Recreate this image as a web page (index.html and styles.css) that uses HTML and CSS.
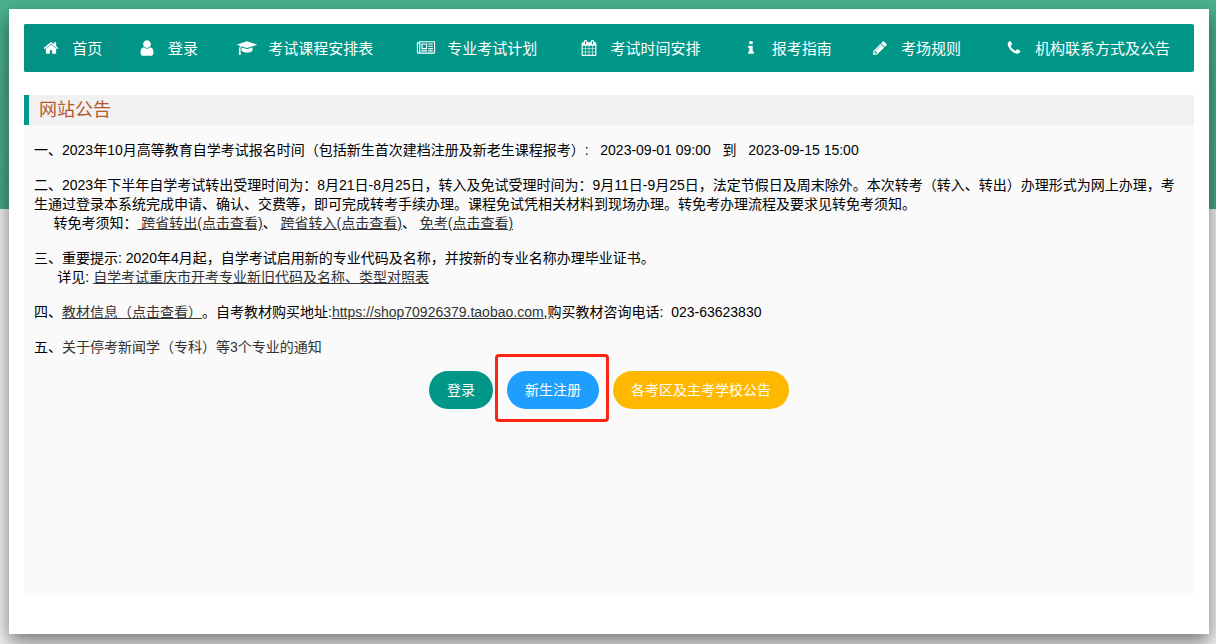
FILE: index.html
```html
<!DOCTYPE html>
<html lang="zh-CN">
<head>
<meta charset="utf-8">
<meta name="viewport" content="width=device-width, initial-scale=1">
<title>网站公告</title>
<link rel="stylesheet" href="styles.css">
</head>
<body class="page">
<div class="card">
  <nav class="nav">
    <ul class="nav-list">
      <li class="nav-item nav-item-active"><a class="nav-link" href="#"><svg class="icon" viewBox="0 0 1792 1792" aria-hidden="true"><path d="M1472 992v480q0 26-19 45t-45 19h-384v-384h-256v384h-384q-26 0-45-19t-19-45v-480q0-1 .5-3t.5-3l575-474 575 474q1 2 1 6zm223-69l-62 74q-8 9-21 11h-3q-13 0-21-7l-692-577-692 577q-12 8-24 7-13-2-21-11l-62-74q-8-10-7-23.5t11-21.5l719-599q32-26 76-26t76 26l244 204v-195q0-14 9-23t23-9h192q14 0 23 9t9 23v408l219 182q10 8 11 21.5t-7 23.5z"/></svg><span>首页</span></a></li>
      <li class="nav-item"><a class="nav-link" href="#"><svg class="icon icon-user" viewBox="0 0 1792 1792" aria-hidden="true"><path d="M1536 1399q0 109-62.5 187t-150.5 78h-854q-88 0-150.5-78t-62.5-187q0-85 8.5-160.5t31.5-152 58.5-131 94-89 134.5-34.5q131 128 313 128t313-128q76 0 134.5 34.5t94 89 58.5 131 31.5 152 8.5 160.5zm-256-887q0 159-112.5 271.5t-271.5 112.5-271.5-112.5-112.5-271.5 112.5-271.5 271.5-112.5 271.5 112.5 112.5 271.5z"/></svg><span>登录</span></a></li>
      <li class="nav-item"><a class="nav-link" href="#"><svg class="icon" viewBox="0 0 2304 1792" aria-hidden="true"><path d="M1774 836l18 316q4 69-82 128t-235 93.5-323 34.5-323-34.5-235-93.5-82-128l18-316 574 181q22 7 48 7t48-7zm530-324q0 23-22 31l-1120 352q-4 1-10 1t-10-1l-652-206q-43 34-71 111.5t-34 178.5q63 36 63 109 0 69-58 107l58 433q2 14-8 25-9 11-24 11h-192q-15 0-24-11-10-11-8-25l58-433q-58-38-58-107 0-73 65-111 11-207 98-330l-333-104q-22-8-22-31t22-31l1120-352q4-1 10-1t10 1l1120 352q22 8 22 31z"/></svg><span>考试课程安排表</span></a></li>
      <li class="nav-item"><a class="nav-link" href="#"><svg class="icon" viewBox="0 0 2048 1792" aria-hidden="true"><path d="M1024 512h-384v384h384v-384zm128 640v128h-640v-128h640zm0-768v640h-640v-640h640zm640 768v128h-512v-128h512zm0-256v128h-512v-128h512zm0-256v128h-512v-128h512zm0-256v128h-512v-128h512zm-1536 960v-960h-128v960q0 26 19 45t45 19 45-19 19-45zm1664 0v-1088h-1536v1088q0 33-11 64h1483q26 0 45-19t19-45zm128-1216v1216q0 80-56 136t-136 56h-1664q-80 0-136-56t-56-136v-1088h256v-128h1792z"/></svg><span>专业考试计划</span></a></li>
      <li class="nav-item"><a class="nav-link" href="#"><svg class="icon" viewBox="0 0 1792 1792" aria-hidden="true"><path d="M192 1664h288v-288h-288v288zm352 0h320v-288h-320v288zm-352-352h288v-320h-288v320zm352 0h320v-320h-320v320zm-352-384h288v-288h-288v288zm736 736h320v-288h-320v288zm-384-736h320v-288h-320v288zm768 736h288v-288h-288v288zm-384-352h320v-320h-320v320zm-352-864v-288q0-13-9.5-22.5t-22.5-9.5h-64q-13 0-22.5 9.5t-9.5 22.5v288q0 13 9.5 22.5t22.5 9.5h64q13 0 22.5-9.5t9.5-22.5zm736 864h288v-320h-288v320zm-384-384h320v-288h-320v288zm384 0h288v-288h-288v288zm32-480v-288q0-13-9.5-22.5t-22.5-9.5h-64q-13 0-22.5 9.5t-9.5 22.5v288q0 13 9.5 22.5t22.5 9.5h64q13 0 22.5-9.5t9.5-22.5zm384-64v1280q0 52-38 90t-90 38h-1408q-52 0-90-38t-38-90v-1280q0-52 38-90t90-38h128v-96q0-66 47-113t113-47h64q66 0 113 47t47 113v96h384v-96q0-66 47-113t113-47h64q66 0 113 47t47 113v96h128q52 0 90 38t38 90z"/></svg><span>考试时间安排</span></a></li>
      <li class="nav-item"><a class="nav-link" href="#"><svg class="icon" viewBox="0 0 1792 1792" aria-hidden="true"><path d="M1216 1344v128q0 26-19 45t-45 19h-512q-26 0-45-19t-19-45v-128q0-26 19-45t45-19h64v-384h-64q-26 0-45-19t-19-45v-128q0-26 19-45t45-19h384q26 0 45 19t19 45v576h64q26 0 45 19t19 45zm-128-1152v192q0 26-19 45t-45 19h-256q-26 0-45-19t-19-45v-192q0-26 19-45t45-19h256q26 0 45 19t19 45z"/></svg><span>报考指南</span></a></li>
      <li class="nav-item"><a class="nav-link" href="#"><svg class="icon" viewBox="0 0 1792 1792" aria-hidden="true"><path d="M491 1536l91-91-235-235-91 91v107h128v128h107zm523-928q0-22-22-22-10 0-17 7l-542 542q-7 7-7 17 0 22 22 22 10 0 17-7l542-542q7-7 7-17zm-54-192l416 416-832 832h-416v-416zm683 96q0 53-37 90l-166 166-416-416 166-165q36-38 90-38 53 0 91 38l235 234q37 39 37 91z"/></svg><span>考场规则</span></a></li>
      <li class="nav-item"><a class="nav-link" href="#"><svg class="icon" viewBox="0 0 1792 1792" aria-hidden="true"><path d="M1600 1240q0 27-10 70.5t-21 68.5q-21 50-122 106-94 51-186 51-27 0-53-3.5t-57.5-12.5-47-14.5-55.5-20.5-49-18q-98-35-175-83-127-79-264-216t-216-264q-48-77-83-175-3-9-18-49t-20.5-55.5-14.5-47-12.5-57.5-3.5-53q0-92 51-186 56-101 106-122 25-11 68.5-21t70.5-10q14 0 21 3 18 6 53 76 11 19 30 54t35 63.5 31 53.5q3 4 17.5 25t21.5 35.5 7 28.5q0 20-28.5 50t-62 55-62 53-28.5 46q0 9 5 22.5t8.5 20.5 14 24 11.5 19q76 137 174 235t235 174q2 1 19 11.5t24 14 20.5 8.5 22.5 5q18 0 46-28.5t53-62 55-62 50-28.5q14 0 28.5 7t35.5 21.5 25 17.5q25 15 53.5 31t63.5 35 54 30q70 35 76 53 3 7 3 21z"/></svg><span>机构联系方式及公告</span></a></li>
    </ul>
  </nav>
  <main class="notice">
    <h1 class="notice-title">网站公告</h1>
    <div class="notice-body">
      <p class="item">一、2023年10月高等教育自学考试报名时间（包括新生首次建档注册及新老生课程报考）:&nbsp;&nbsp; 2023-09-01 09:00 &nbsp; 到 &nbsp; 2023-09-15 15:00</p>
      <p class="item">二、2023年下半年自学考试转出受理时间为：8月21日-8月25日，转入及免试受理时间为：9月11日-9月25日，法定节假日及周末除外。本次转考（转入、转出）办理形式为网上办理，考生通过登录本系统完成申请、确认、交费等，即可完成转考手续办理。课程免试凭相关材料到现场办理。转免考办理流程及要求见转免考须知。<br>&nbsp; &nbsp; &nbsp;转免考须知：<a class="link" href="#">&nbsp;跨省转出(点击查看)</a>、 <a class="link" href="#">跨省转入(点击查看)</a>、 <a class="link" href="#">免考(点击查看)</a></p>
      <p class="item">三、重要提示: 2020年4月起，自学考试启用新的专业代码及名称，并按新的专业名称办理毕业证书。<br>&nbsp; &nbsp; &nbsp; 详见: <a class="link" href="#">自学考试重庆市开考专业新旧代码及名称、类型对照表</a></p>
      <p class="item">四、<a class="link" href="#">教材信息（点击查看）</a>。自考教材购买地址:<a class="link" href="#">https://shop70926379.taobao.com</a>,购买教材咨询电话:&nbsp; 023-63623830</p>
      <p class="item">五、<a class="link link-plain" href="#">关于停考新闻学（专科）等3个专业的通知</a></p>
      <div class="actions">
        <button class="btn btn-login" type="button">登录</button>
        <button class="btn btn-register" type="button">新生注册</button>
        <button class="btn btn-notice" type="button">各考区及主考学校公告</button>
      </div>
    </div>
  </main>
</div>
</body>
</html>
```
FILE: styles.css
```css
* { box-sizing: border-box; }

.page {
  margin: 0;
  min-height: 100vh;
  padding: 9px 7px 10px 9px;
  display: flex;
  background: linear-gradient(#4ab18c, #46a883) 0 0 / 100% 209px no-repeat #f0f0f0;
  font: 14px/19px "Liberation Sans", "Noto Sans CJK SC", sans-serif;
  text-spacing-trim: space-all;
  color: #000;
}

.card {
  flex: 1;
  min-width: 0;
  display: flex;
  flex-direction: column;
  gap: 23px;
  padding: 15px 15px 39px;
  background: #fff;
  box-shadow: 0 8px 18px rgba(0, 0, 0, 0.5);
}

.nav {
  background: #009688;
  border-radius: 2px;
  overflow: hidden;
}

.nav-list {
  display: table;
  width: 100%;
  margin: 0;
  padding: 0;
  list-style: none;
}

.nav-item {
  display: table-cell;
  vertical-align: top;
}

.nav-item-active { background: #029184; }

.nav-link {
  display: flex;
  align-items: center;
  justify-content: center;
  gap: 11px;
  height: 48px;
  padding: 0 12px;
  color: #fff;
  font-size: 15px;
  white-space: nowrap;
  text-decoration: none;
}

.icon {
  flex: none;
  width: 20px;
  height: 16px;
  fill: currentColor;
}

.icon-user { height: 18px; }

.notice {
  flex: 1;
  display: flex;
  flex-direction: column;
  background: #fafafa;
}

.notice-title {
  margin: 0;
  padding-left: 10px;
  border-left: 5px solid #009688;
  background: #f1f1f1;
  color: #b5582b;
  font-size: 18px;
  font-weight: 400;
  line-height: 30px;
}

.notice-body { padding: 16px 10px; }

.item { margin: 0 0 16px; }

.link { color: #333; text-decoration: underline; }

.link-plain { text-decoration: none; }

.actions {
  display: flex;
  justify-content: center;
  gap: 14px;
  margin-top: -2px;
}

.btn {
  position: relative;
  height: 38px;
  padding: 0 18px;
  border: 0;
  border-radius: 19px;
  color: #fff;
  font: inherit;
  white-space: nowrap;
}

.btn-login { background: #009688; }

.btn-register { background: #1e9fff; }

.btn-notice { background: #ffb800; }

.btn-register::after {
  content: "";
  position: absolute;
  inset: -17px -10px -13px -12px;
  border: 3px solid #ff2412;
  border-radius: 4px;
}
```
